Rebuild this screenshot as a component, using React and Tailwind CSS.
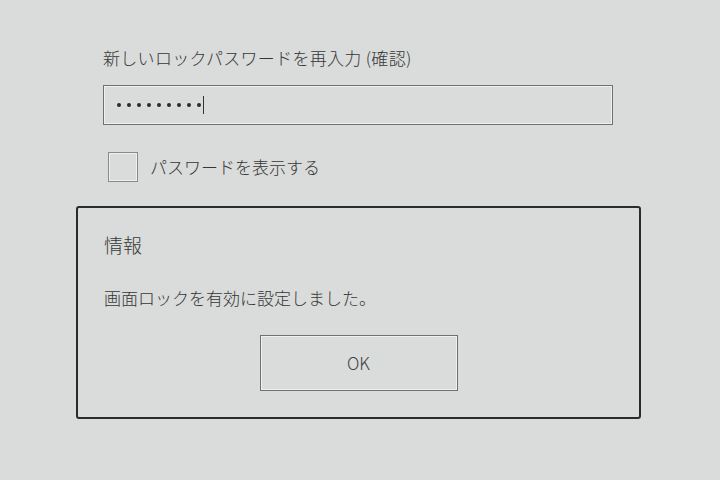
export default function App() {
  const dots = Array.from({ length: 9 })

  return (
    <div
      className="w-[720px] h-[480px] bg-[#d9dcda] text-[#363636] pt-[46px] pl-[76px]"
      style={{ fontFamily: '"Noto Sans CJK JP", "Noto Sans", sans-serif' }}
    >
      <div className="pl-[27px]">
        <div className="text-[17px] leading-[24px] font-light tracking-[0.3px]">新しいロックパスワードを再入力 (確認)</div>

        {/* password field */}
        <div className="mt-[15px] w-[510px] h-[40px] border border-[#707070] shadow-[inset_0_0_0_1px_#eef0ee] flex items-center pl-[13px]">
          <div className="flex items-center gap-[6.5px]">
            {dots.map((_, i) => (
              <span key={i} className="w-[3.5px] h-[3.5px] rounded-full bg-[#2a2a2a]" />
            ))}
          </div>
          <span className="ml-[2px] w-px h-[18px] bg-[#333]" />
        </div>

        {/* show password */}
        <div className="mt-[27px] flex items-center">
          <div className="ml-[5px] w-[30px] h-[30px] border border-[#8a8a8a] shadow-[inset_0_0_0_1px_#eef0ee]" />
          <span className="ml-[12px] text-[17px] leading-[24px] font-light">パスワードを表示する</span>
        </div>
      </div>

      {/* info dialog */}
      <div className="mt-[24px] w-[565px] h-[213px] border-2 border-[#2b2b2b] rounded-[3px] px-[26px] pt-[23px]">
        <div className="text-[19px] leading-[28px] font-light">情報</div>
        <div className="mt-[27px] text-[17px] leading-[24px] font-light">画面ロックを有効に設定しました。</div>
        <div className="mt-[25px] flex justify-center">
          <button
            type="button"
            className="w-[198px] h-[56px] border border-[#707070] shadow-[inset_0_0_0_1px_#eef0ee] text-[17px] font-light text-[#404040]"
          >
            OK
          </button>
        </div>
      </div>
    </div>
  )
}
